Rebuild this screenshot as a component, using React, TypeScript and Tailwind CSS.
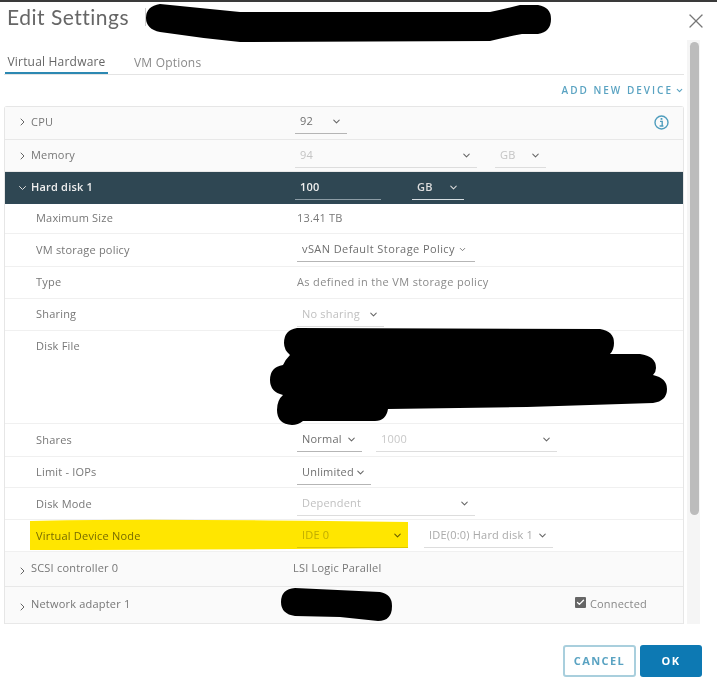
import { ReactNode } from 'react';
import { Check, ChevronDown, ChevronRight, X } from 'lucide-react';

function Select({ value, width, tone = 'text-[#6f6f6f]', line = 'border-[#b5b5b5]', chevron = 'text-[#666]', tight }: { value: string; width: string; tone?: string; line?: string; chevron?: string; tight?: boolean }) {
  return (
    <div className={`flex h-[24px] items-center border-b pl-[5px] pr-[5px] ${tight ? 'gap-[3px]' : 'justify-between'} ${width} ${line}`}>
      <span className={tone}>{value}</span>
      <ChevronDown size={tight ? 9 : 11} strokeWidth={2.2} className={chevron} />
    </div>
  );
}

function GroupRow({ label, open, dark, low, height, children }: { label: string; open?: boolean; dark?: boolean; low?: boolean; height: string; children?: ReactNode }) {
  return (
    <div className={`flex items-center border-b ${height} ${low ? 'pb-[1px]' : ''} ${dark ? 'border-[#2f4856] bg-[#2f4753] text-white' : 'border-[#e8e8e8] bg-[#fafafa] text-[#767676]'}`}>
      <div className="flex w-[290px] shrink-0 items-center pl-[9px]">
        {open ? <ChevronDown size={12} strokeWidth={2} className="w-[17px] text-[#ddd]" /> : <ChevronRight size={12} strokeWidth={2} className={`w-[17px] text-[#666] ${low ? 'mt-[5px]' : ''}`} />}
        <span className={`${dark ? 'font-semibold text-[#eee]' : ''}`}>{label}</span>
      </div>
      {children}
    </div>
  );
}

function DetailRow({ label, height = 'h-[32px]', top, children }: { label: string; height?: string; top?: boolean; children?: ReactNode }) {
  return (
    <div className={`flex border-b border-[#f0f0f0] ${height} ${top ? 'items-start pt-[7px]' : 'items-center'}`}>
      <span className="w-[292px] shrink-0 pl-[31px] text-[#777]">{label}</span>
      {children}
    </div>
  );
}

export default function App() {
  return (
    <div className="relative flex h-[690px] w-[717px] flex-col overflow-hidden bg-white font-['Open_Sans',sans-serif] text-[11px] tracking-[0.2px] blur-[0.5px]">
      <div className="h-[2px] bg-[#3a3a3a]" />

      <header className="flex h-[38px] items-center justify-between pl-[7px] pr-[9px]">
        <div className="flex items-center pb-[8px]">
          <h1 className="w-[131px] font-['Lato',sans-serif] text-[21px] tracking-[0.5px] text-[#666]">Edit Settings</h1>
          <div className="ml-[7px] h-[18px] w-px bg-[#ccc]" />
        </div>
        <X size={24} strokeWidth={1.3} className="text-[#777]" />
      </header>

      <div className="flex h-[584px]">
        <div className="w-[684px] shrink-0 overflow-hidden pl-[4px]">
          <nav className="flex h-[35px] items-end gap-[26px] border-b border-[#e4e4e4] pl-px text-[12px]">
            <div className="flex h-[31px] w-[103px] items-center justify-center border-b-2 border-[#2c88b2] pt-[8px] text-[#666]">Virtual Hardware</div>
            <div className="flex h-[31px] items-center pt-[8px] text-[#8a8a8a]">VM Options</div>
          </nav>

          <div className="flex h-[31px] items-center justify-end gap-[2px] text-[10px] font-semibold tracking-[2px] text-[#5aa3c2]">
            ADD NEW DEVICE
            <ChevronDown size={9} strokeWidth={3} />
          </div>

          <div className="rounded-t-[3px] border-x border-t border-[#e6e6e6]">
            <GroupRow label="CPU" height="h-[33px] pb-[2px]">
              <div className="flex flex-1 items-center justify-between pr-[14px]">
                <Select value="92" width="w-[52px]" />
                <svg width="15" height="15" viewBox="0 0 15 15" fill="none" className="text-[#4f9dbd]">
                  <circle cx="7.5" cy="7.5" r="6.5" stroke="currentColor" strokeWidth="1.4" />
                  <rect x="6.6" y="3" width="1.8" height="1.8" fill="currentColor" />
                  <path d="M6 6.4h2.2v4.2M5.6 11h3.8" stroke="currentColor" strokeWidth="1.4" />
                </svg>
              </div>
            </GroupRow>
            <GroupRow label="Memory" height="h-[32px]">
              <div className="flex items-center gap-[18px]">
                <Select value="94" width="w-[182px]" tone="text-[#c4c4c4]" line="border-[#ddd]" />
                <Select value="GB" width="w-[51px]" tone="text-[#c4c4c4]" line="border-[#ddd]" />
              </div>
            </GroupRow>
            <GroupRow label="Hard disk 1" open dark height="h-[32px]">
              <div className="flex items-center gap-[31px]">
                <div className="flex h-[24px] w-[86px] items-center border-b border-[#8c9ca5] pl-[5px] font-semibold text-[#eee]">100</div>
                <Select value="GB" width="w-[52px]" tone="font-semibold text-[#ddd]" line="border-[#d5dde1]" chevron="text-[#ddd]" />
              </div>
            </GroupRow>

            <DetailRow label="Maximum Size" height="h-[30px]">
              <span className="text-[#777]">13.41 TB</span>
            </DetailRow>
            <DetailRow label="VM storage policy" height="h-[33px]">
              <Select value="vSAN Default Storage Policy" width="w-[178px]" tone="tracking-[0.42px] text-[#6f6f6f]" tight />
            </DetailRow>
            <DetailRow label="Type">
              <span className="tracking-[0.35px] text-[#8a8a8a]">As defined in the VM storage policy</span>
            </DetailRow>
            <DetailRow label="Sharing">
              <Select value="No sharing" width="w-[87px]" tone="text-[#c0c0c0]" line="border-[#ddd]" />
            </DetailRow>
            <DetailRow label="Disk File" height="h-[93px]" top />
            <DetailRow label="Shares" height="h-[33px]">
              <div className="flex items-center gap-[14px]">
                <Select value="Normal" width="w-[65px]" />
                <Select value="1000" width="w-[181px]" tone="text-[#c8c8c8]" line="border-[#ddd]" />
              </div>
            </DetailRow>
            <DetailRow label="Limit - IOPs" height="h-[31px] pt-[1px]">
              <Select value="Unlimited" width="w-[74px]" />
            </DetailRow>
            <DetailRow label="Disk Mode" height="h-[32px] pt-[1px]">
              <Select value="Dependent" width="w-[178px]" tone="text-[#c0c0c0]" line="border-[#ddd]" />
            </DetailRow>
            <DetailRow label="Virtual Device Node" height="h-[32px] pt-[1px]">
              <div className="flex items-center gap-[16px]">
                <Select value="IDE 0" width="w-[111px]" tone="text-[#c0c0c0]" line="border-[#ddd]" />
                <Select value="IDE(0:0) Hard disk 1" width="w-[129px]" tone="text-[#aaa]" line="border-[#ddd]" />
              </div>
            </DetailRow>

            <GroupRow label="SCSI controller 0" low height="h-[35px]">
              <span className="ml-[-2px] text-[#777]">LSI Logic Parallel</span>
            </GroupRow>
            <GroupRow label="Network adapter 1" low height="h-[37px]">
              <div className="flex flex-1 items-center justify-end gap-[4px] pr-[36px] text-[#888]">
                <span className="mb-[4px] flex h-[11px] w-[11px] items-center justify-center rounded-[1px] bg-[#666]">
                  <Check size={9} strokeWidth={3.5} className="text-white" />
                </span>
                Connected
              </div>
            </GroupRow>
          </div>
        </div>

        <div className="ml-[3px] h-full w-[13px] bg-[#f5f5f5] pl-[3px] pt-[2px]">
          <div className="h-[473px] w-[9px] rounded-full bg-[#bcbcbc]" />
        </div>
      </div>

      <footer className="flex flex-1 items-start justify-end gap-[4px] pr-[15px] pt-[21px] text-[11px] font-bold tracking-[1.4px]">
        <button className="h-[32px] w-[73px] rounded-[3px] border-2 border-[#a9cfdd] text-[#5aa3c2]">CANCEL</button>
        <button className="h-[32px] w-[62px] rounded-[3px] bg-[#0d79b3] text-white">OK</button>
      </footer>

      {/* highlighter and redaction strokes drawn over the dialog */}
      <svg width="717" height="690" viewBox="0 0 717 690" className="pointer-events-none absolute inset-0 mix-blend-multiply">
        <path d="M30 521Q130 518 408 522L408 548Q200 550 30 550Z" fill="#ffe600" />
      </svg>
      <svg width="717" height="690" viewBox="0 0 717 690" className="pointer-events-none absolute inset-0">
        <path d="M160 4Q200 8 240 12L490 12Q505 9 520 5L538 5Q551 7 551 19Q551 32 538 34L522 34Q505 37 490 41L240 42Q200 38 160 32Q146 29 146 18Q146 6 160 4Z" fill="#000" />
        <path d="M297 328L600 329Q614 331 614 343Q614 350 610 354L640 354Q656 356 656 368Q656 372 653 375Q667 378 667 389Q667 401 653 403L527 407L388 409Q386 421 375 421L303 421Q298 425 292 425Q277 424 277 410Q277 400 283 395Q270 392 270 380Q270 367 283 365Q285 360 290 355Q284 350 284 343Q284 330 297 328Z" fill="#000" />
        <path d="M295 588L380 592Q392 594 392 606Q392 621 378 621L340 617L295 616Q281 614 281 602Q281 589 295 588Z" fill="#000" />
      </svg>
    </div>
  );
}
